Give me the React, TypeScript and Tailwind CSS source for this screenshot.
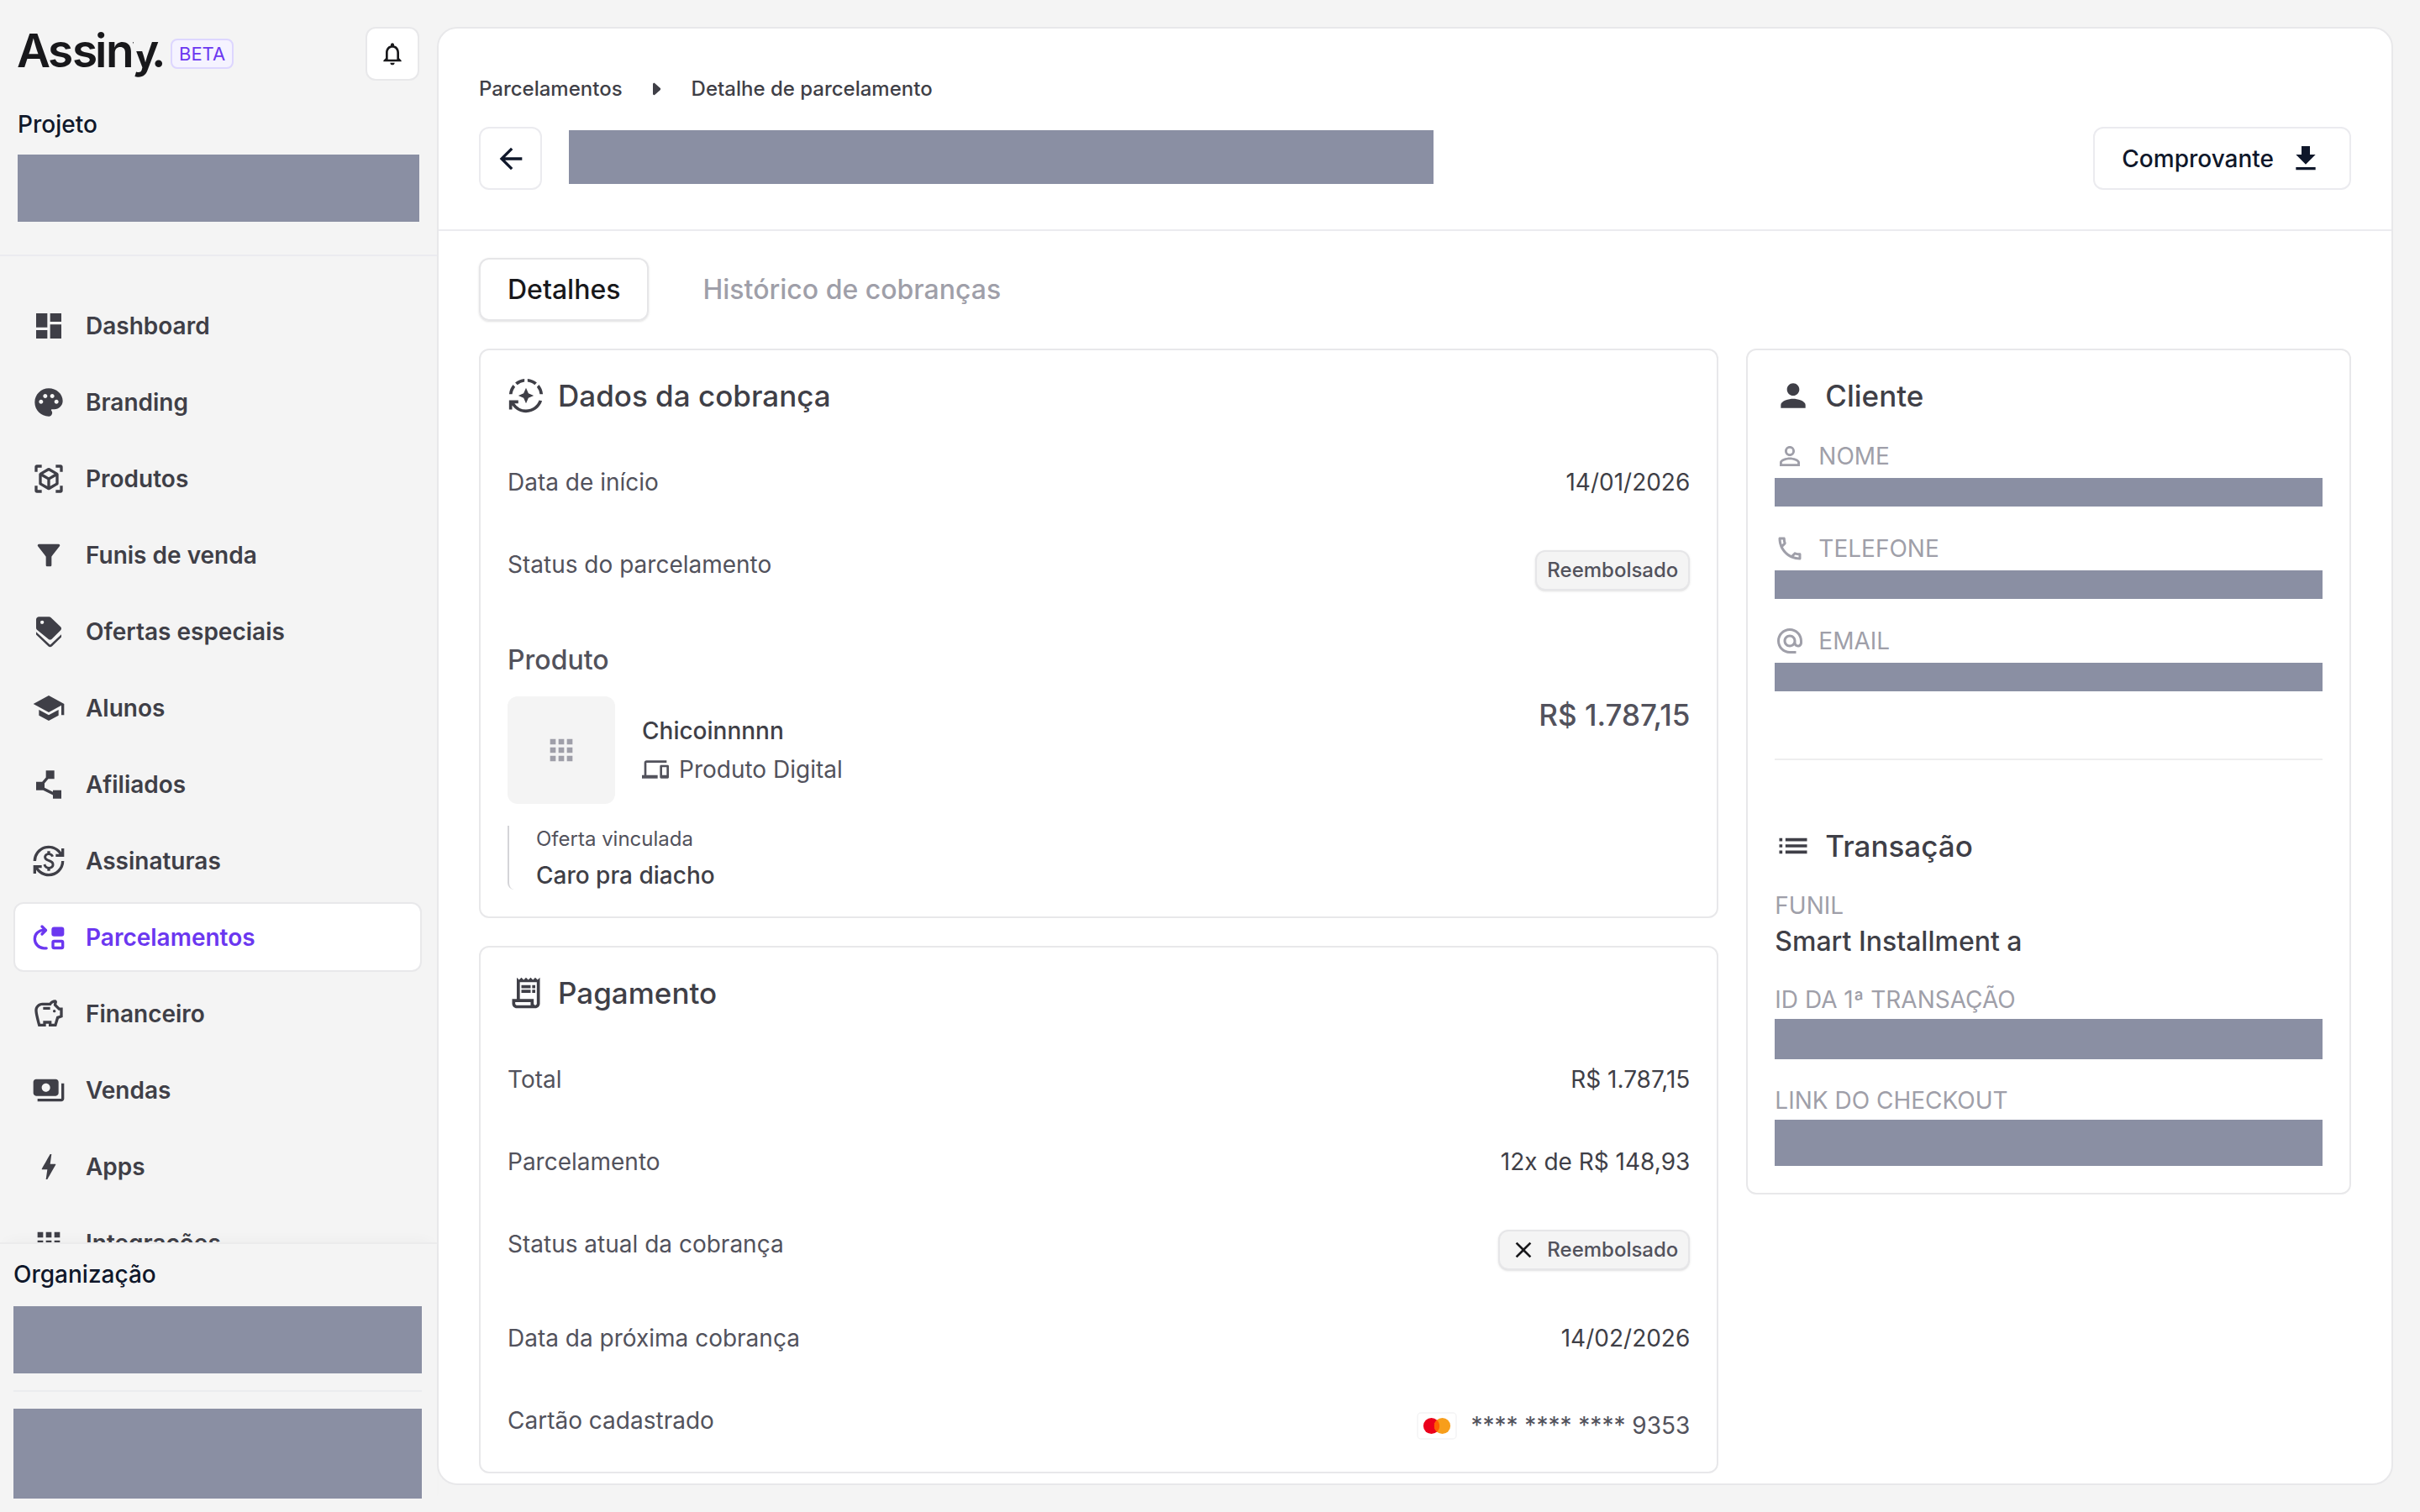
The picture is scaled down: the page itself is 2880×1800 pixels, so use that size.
import type { ReactNode } from "react";
import type { IconType } from "react-icons";
import {
  MdAlternateEmail,
  MdApps,
  MdArrowBack,
  MdAutoMode,
  MdBolt,
  MdClose,
  MdCurrencyExchange,
  MdDashboard,
  MdDevices,
  MdFileDownload,
  MdFilterAlt,
  MdList,
  MdNotificationsNone,
  MdOutlineLocalPhone,
  MdOutlineReceiptLong,
  MdOutlineSavings,
  MdPalette,
  MdPayments,
  MdPerson,
  MdPersonOutline,
  MdPolyline,
  MdSchool,
  MdViewInAr,
} from "react-icons/md";

type IconProps = { className?: string };

const TagsIcon = ({ className }: IconProps) => (
  <svg viewBox="0 0 24 24" fill="currentColor" className={className}>
    <path
      fillRule="evenodd"
      d="M5 1.3h7.2c.5 0 1 .2 1.4.6l6.9 6.6c.7.7.7 1.7 0 2.4l-6.3 6.3c-.7.7-1.8.7-2.5 0L3.6 10.7c-.4-.4-.6-.9-.6-1.4V3.3c0-1.1.9-2 2-2Zm2.3 2.7a1.3 1.3 0 1 0 0 2.6 1.3 1.3 0 0 0 0-2.6Z"
    />
    <path d="M3 12.1v2l8.6 8.2c.8.8 2 .8 2.8 0l6.6-6.4v-2l-7.7 7.3c-.2.2-.4.2-.6 0L3 12.1Z" />
  </svg>
);

const InstallmentsIcon = ({ className }: IconProps) => (
  <svg viewBox="0 0 24 24" fill="none" stroke="currentColor" strokeWidth="2" className={className}>
    <path d="M10.3 19.7H8.6A6.7 6.7 0 0 1 2 13c0-3.6 2.9-6.2 6.6-6.2h1" strokeLinecap="round" />
    <path d="M7.2 4.2 9.9 6.9 7.2 9.6" strokeLinecap="round" strokeLinejoin="round" />
    <rect x="14" y="4.5" width="9" height="6.7" rx="1.8" fill="currentColor" stroke="none" />
    <rect x="15" y="14.7" width="7" height="4.8" rx="0.8" />
  </svg>
);

const CaretIcon = ({ className }: IconProps) => (
  <svg viewBox="0 0 10 16" fill="currentColor" className={className}>
    <path d="M0 2.2C0 .9 1.5.3 2.4 1.2l6.2 5.6c.8.7.8 1.7 0 2.4l-6.2 5.6C1.5 15.7 0 15.1 0 13.8Z" />
  </svg>
);

const MastercardIcon = ({ className }: IconProps) => (
  <svg viewBox="0 0 48 33" className={className}>
    <rect x="1" y="1" width="46" height="31" rx="4" fill="#fff" stroke="#f4f4f5" strokeWidth="1.5" />
    <circle cx="17.5" cy="16.5" r="9.6" fill="#eb001b" />
    <circle cx="30.5" cy="16.5" r="9.6" fill="#f79e1b" />
    <path d="M24 9.4a9.6 9.6 0 0 1 0 14.2 9.6 9.6 0 0 1 0-14.2Z" fill="#ff5f00" />
  </svg>
);

const Logo = () => (
  <svg viewBox="0 0 174 64" className="h-16 w-[174px] overflow-visible" role="img" aria-label="Assiny">
    <text
      x="-1 36 65 92 105 136 159"
      y="48"
      fill="#18181b"
      fontFamily="Inter, sans-serif"
      fontSize="55"
      fontWeight="600"
    >
      Assiny.
    </text>
    {/* short left arm of the y */}
    <path d="M138 16h17v6l-3 7h-14Z" fill="#f4f4f4" />
  </svg>
);

type NavEntry = { label: string; icon: IconType | ((p: IconProps) => ReactNode); active?: boolean };

const navItems: NavEntry[] = [
  { label: "Dashboard", icon: MdDashboard },
  { label: "Branding", icon: MdPalette },
  { label: "Produtos", icon: MdViewInAr },
  { label: "Funis de venda", icon: MdFilterAlt },
  { label: "Ofertas especiais", icon: TagsIcon },
  { label: "Alunos", icon: MdSchool },
  { label: "Afiliados", icon: MdPolyline },
  { label: "Assinaturas", icon: MdCurrencyExchange },
  { label: "Parcelamentos", icon: InstallmentsIcon, active: true },
  { label: "Financeiro", icon: MdOutlineSavings },
  { label: "Vendas", icon: MdPayments },
  { label: "Apps", icon: MdBolt },
  { label: "Integrações", icon: MdApps },
];

const Redacted = ({ className }: { className: string }) => (
  <div className={`bg-[#8a8fa3] ${className}`} />
);

const Sidebar = () => (
  <aside className="flex h-full w-[520px] shrink-0 flex-col">
    <div className="border-b-2 border-[#ebebef] px-[21px] pt-8 pb-[39px]">
      <div className="flex items-center">
        <Logo />
        <span className="ml-2 rounded-lg border-2 border-violet-200 bg-violet-50 px-2 text-[22px] leading-8 text-[#6b37f0]">
          BETA
        </span>
        <button
          aria-label="Notificações"
          className="ml-auto flex size-16 items-center justify-center rounded-xl border-2 border-[#e8e8ea] bg-white text-zinc-900"
        >
          <MdNotificationsNone className="size-8" />
        </button>
      </div>
      <p className="mt-8 text-[28px] leading-[40px] font-medium text-[#0f172a]">Projeto</p>
      <Redacted className="mt-4 h-20" />
    </div>
    <nav className="flex min-h-0 flex-1 flex-col gap-2 overflow-hidden pt-[41px] pr-[18px] pl-4">
      {navItems.map(({ label, icon: Icon, active }) => (
        <a
          key={label}
          href="#"
          className={`flex h-[83px] shrink-0 items-center gap-6 rounded-xl border-2 px-5 text-[28px] font-semibold ${
            active ? "border-[#e8e8ea] bg-white text-[#6b37f0]" : "border-transparent text-zinc-700"
          }`}
        >
          <Icon className="size-10" />
          {label}
        </a>
      ))}
    </nav>
    <div className="relative border-t-2 border-[#ebebec] bg-[#f4f4f4] pt-4 pr-[18px] pb-4 pl-4 shadow-[0_-8px_16px_-8px_rgba(0,0,0,0.04)]">
      <p className="text-[28px] leading-[40px] font-medium text-[#0f172a]">Organização</p>
      <Redacted className="mt-[18px] h-20" />
      <hr className="my-5 border-t-2 border-[#ebecee]" />
      <Redacted className="h-[107px]" />
    </div>
  </aside>
);

const Card = ({ children, className = "" }: { children: ReactNode; className?: string }) => (
  <section className={`flex flex-col rounded-xl border-2 border-[#e8e8ea] p-8 ${className}`}>
    {children}
  </section>
);

const CardTitle = ({ icon: Icon, children }: { icon: IconType; children: ReactNode }) => (
  <h2 className="flex h-11 items-center gap-4 text-[35px] font-medium text-zinc-700">
    <Icon className="size-11" />
    {children}
  </h2>
);

const Row = ({ label, children }: { label: string; children: ReactNode }) => (
  <div className="flex items-start justify-between text-[28px] leading-[34px]">
    <dt className="text-zinc-600">{label}</dt>
    <dd className="text-zinc-700">{children}</dd>
  </div>
);

const Badge = ({ children }: { children: ReactNode }) => (
  <span className="flex h-12 items-center rounded-xl border-2 border-[#e6e6e8] bg-[#f4f4f4] px-3 text-[24px] font-medium text-zinc-600 shadow-sm">
    {children}
  </span>
);

const ClientField = ({ icon: Icon, label }: { icon: IconType; label: string }) => (
  <div>
    <dt className="flex h-9 items-center gap-4 text-[28px] text-zinc-400">
      <Icon className="size-9" />
      {label}
    </dt>
    <dd className="mt-2">
      <Redacted className="h-[34px]" />
    </dd>
  </div>
);

const TransactionField = ({ label, children }: { label: string; children: ReactNode }) => (
  <div>
    <dt className="mb-1.5 text-[28px] leading-[34px] text-zinc-400">{label}</dt>
    <dd className="text-[32px] leading-[40px] font-medium text-zinc-700">{children}</dd>
  </div>
);

const Header = () => (
  <header className="border-b-2 border-[#ebebef] px-12 pt-[56px] pb-[47px]">
    <div className="flex items-center text-[24px] leading-[32px] font-medium text-zinc-700">
      <a href="#">Parcelamentos</a>
      <CaretIcon className="mx-9 h-4 w-2.5" />
      <span>Detalhe de parcelamento</span>
    </div>
    <div className="mt-[29px] flex items-start">
      <button
        aria-label="Voltar"
        className="flex size-[75px] shrink-0 items-center justify-center rounded-xl border-2 border-[#ebebef] text-[#0f172a]"
      >
        <MdArrowBack className="size-10" />
      </button>
      <Redacted className="mt-1 mr-8 ml-8 h-16 max-w-[1029px] flex-1" />
      <button className="ml-auto flex h-[75px] items-center gap-[18px] rounded-xl border-2 border-[#ebebef] px-8 text-[28px] font-medium text-[#0f172a]">
        Comprovante
        <MdFileDownload className="size-10" />
      </button>
    </div>
  </header>
);

const Tabs = () => (
  <div role="tablist" className="flex gap-8">
    <button
      role="tab"
      aria-selected="true"
      className="h-[75px] rounded-xl border-2 border-[#e6e6e8] px-8 text-[32px] font-medium text-zinc-900 shadow-sm"
    >
      Detalhes
    </button>
    <button role="tab" aria-selected="false" className="h-[75px] px-8 text-[32px] font-medium text-zinc-400">
      Histórico de cobranças
    </button>
  </div>
);

const ChargeCard = () => (
  <Card>
    <CardTitle icon={MdAutoMode}>Dados da cobrança</CardTitle>
    <dl className="mt-16 flex flex-col gap-16">
      <Row label="Data de início">14/01/2026</Row>
      <Row label="Status do parcelamento">
        <Badge>Reembolsado</Badge>
      </Row>
    </dl>
    <h3 className="mt-16 text-[32px] leading-[38px] font-medium text-zinc-600">Produto</h3>
    <div className="mt-6 flex items-start justify-between">
      <div className="flex items-center gap-8">
        <div className="flex size-32 items-center justify-center rounded-xl bg-[#f4f4f4] text-zinc-400">
          <MdApps className="size-10" />
        </div>
        <div className="flex flex-col gap-3 text-[28px] leading-[34px]">
          <p className="font-medium text-zinc-700">Chicoinnnnn</p>
          <p className="flex items-center gap-3 text-zinc-600">
            <MdDevices className="size-8" />
            Produto Digital
          </p>
        </div>
      </div>
      <p className="text-[35px] leading-[44px] font-medium text-zinc-600">R$ 1.787,15</p>
    </div>
    <div className="mt-[26px] rounded-bl-lg border-l-2 border-zinc-300 pl-8">
      <p className="text-[24px] leading-[32px] text-zinc-600">Oferta vinculada</p>
      <p className="mt-2.5 text-[28px] leading-[34px] font-medium text-zinc-700">Caro pra diacho</p>
    </div>
  </Card>
);

const PaymentCard = () => (
  <Card>
    <CardTitle icon={MdOutlineReceiptLong}>Pagamento</CardTitle>
    <dl className="mt-16 flex flex-col gap-16">
      <Row label="Total">R$ 1.787,15</Row>
      <Row label="Parcelamento">12x de R$ 148,93</Row>
      <Row label="Status atual da cobrança">
        <Badge>
          <MdClose className="mr-3 size-8 text-zinc-900" />
          Reembolsado
        </Badge>
      </Row>
      <Row label="Data da próxima cobrança">14/02/2026</Row>
      <Row label="Cartão cadastrado">
        <span className="flex h-[46px] items-center gap-4 text-zinc-600">
          <MastercardIcon className="h-[33px] w-12" />
          **** **** **** 9353
        </span>
      </Row>
    </dl>
  </Card>
);

const CustomerCard = () => (
  <Card className="self-start">
    <CardTitle icon={MdPerson}>Cliente</CardTitle>
    <dl className="mt-8 flex flex-col gap-8">
      <ClientField icon={MdPersonOutline} label="NOME" />
      <ClientField icon={MdOutlineLocalPhone} label="TELEFONE" />
      <ClientField icon={MdAlternateEmail} label="EMAIL" />
    </dl>
    <hr className="my-20 border-t-2 border-[#eeeeef]" />
    <CardTitle icon={MdList}>Transação</CardTitle>
    <dl className="mt-8 flex flex-col gap-8">
      <TransactionField label="FUNIL">Smart Installment a</TransactionField>
      <TransactionField label="ID DA 1ª TRANSAÇÃO">
        <Redacted className="h-12" />
      </TransactionField>
      <TransactionField label="LINK DO CHECKOUT">
        <Redacted className="h-[55px]" />
      </TransactionField>
    </dl>
  </Card>
);

export default function App() {
  return (
    <div className="flex h-screen bg-[#f4f4f4] font-['Inter',sans-serif]">
      <Sidebar />
      <main className="my-8 mr-8 flex-1 overflow-hidden rounded-3xl border-2 border-[#e8e8ea] bg-white">
        <Header />
        <div className="px-12 pt-8">
          <Tabs />
          <div className="mt-[33px] grid grid-cols-[41fr_20fr] gap-[33px]">
            <div className="flex flex-col gap-[33px]">
              <ChargeCard />
              <PaymentCard />
            </div>
            <CustomerCard />
          </div>
        </div>
      </main>
    </div>
  );
}
